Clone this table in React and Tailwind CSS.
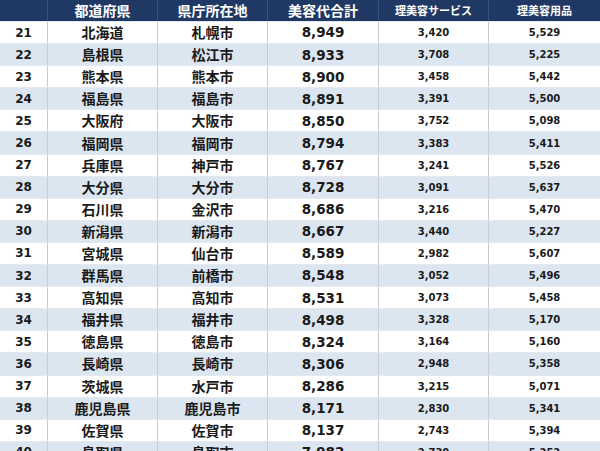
import React from "react";

const rows = [
  [21, "北海道", "札幌市", "8,949", "3,420", "5,529"],
  [22, "島根県", "松江市", "8,933", "3,708", "5,225"],
  [23, "熊本県", "熊本市", "8,900", "3,458", "5,442"],
  [24, "福島県", "福島市", "8,891", "3,391", "5,500"],
  [25, "大阪府", "大阪市", "8,850", "3,752", "5,098"],
  [26, "福岡県", "福岡市", "8,794", "3,383", "5,411"],
  [27, "兵庫県", "神戸市", "8,767", "3,241", "5,526"],
  [28, "大分県", "大分市", "8,728", "3,091", "5,637"],
  [29, "石川県", "金沢市", "8,686", "3,216", "5,470"],
  [30, "新潟県", "新潟市", "8,667", "3,440", "5,227"],
  [31, "宮城県", "仙台市", "8,589", "2,982", "5,607"],
  [32, "群馬県", "前橋市", "8,548", "3,052", "5,496"],
  [33, "高知県", "高知市", "8,531", "3,073", "5,458"],
  [34, "福井県", "福井市", "8,498", "3,328", "5,170"],
  [35, "徳島県", "徳島市", "8,324", "3,164", "5,160"],
  [36, "長崎県", "長崎市", "8,306", "2,948", "5,358"],
  [37, "茨城県", "水戸市", "8,286", "3,215", "5,071"],
  [38, "鹿児島県", "鹿児島市", "8,171", "2,830", "5,341"],
  [39, "佐賀県", "佐賀市", "8,137", "2,743", "5,394"],
  [40, "鳥取県", "鳥取市", "7,982", "2,730", "5,252"],
];

const grid = "grid grid-cols-[48px_110px_110px_111px_110px_111px]";
const jp = "font-['Noto_Sans_CJK_JP',sans-serif]";
const num = "font-['DejaVu_Sans',sans-serif]";

export default function App() {
  return (
    <div className="w-[600px] h-[451px] overflow-hidden bg-white">
      <div className={`${grid} h-[21px] bg-[#203864] text-white font-bold ${jp}`}>
        <div className="border-r border-[#3a5280]" />
        <div className="flex items-center justify-center text-[14px] border-r border-[#3a5280]">都道府県</div>
        <div className="flex items-center justify-center text-[14px] border-r border-[#3a5280]">県庁所在地</div>
        <div className="flex items-center justify-center text-[14px] border-r border-[#3a5280]">美容代合計</div>
        <div className="flex items-center justify-center text-[11px] border-r border-[#3a5280]">理美容サービス</div>
        <div className="flex items-center justify-center text-[11px]">理美容用品</div>
      </div>
      {rows.map((r, i) => (
        <div
          key={r[0]}
          className={`${grid} h-[22.1px] border-t border-[#e4e9f0] text-[#1a1a1a] font-bold ${
            i % 2 === 0 ? "bg-white" : "bg-[#dce6f1]"
          }`}
        >
          <div className={`flex items-center justify-center text-[12px] border-r border-[#c8ccd2] ${num}`}>{r[0]}</div>
          <div className={`flex items-center justify-center text-[14px] border-r border-[#c8ccd2] ${jp}`}>{r[1]}</div>
          <div className={`flex items-center justify-center text-[14px] border-r border-[#c8ccd2] ${jp}`}>{r[2]}</div>
          <div className={`flex items-center justify-center text-[13.5px] border-r border-[#c8ccd2] ${num}`}>{r[3]}</div>
          <div className={`flex items-center justify-center text-[10px] border-r border-[#c8ccd2] ${num}`}>{r[4]}</div>
          <div className={`flex items-center justify-center text-[10px] ${num}`}>{r[5]}</div>
        </div>
      ))}
    </div>
  );
}
